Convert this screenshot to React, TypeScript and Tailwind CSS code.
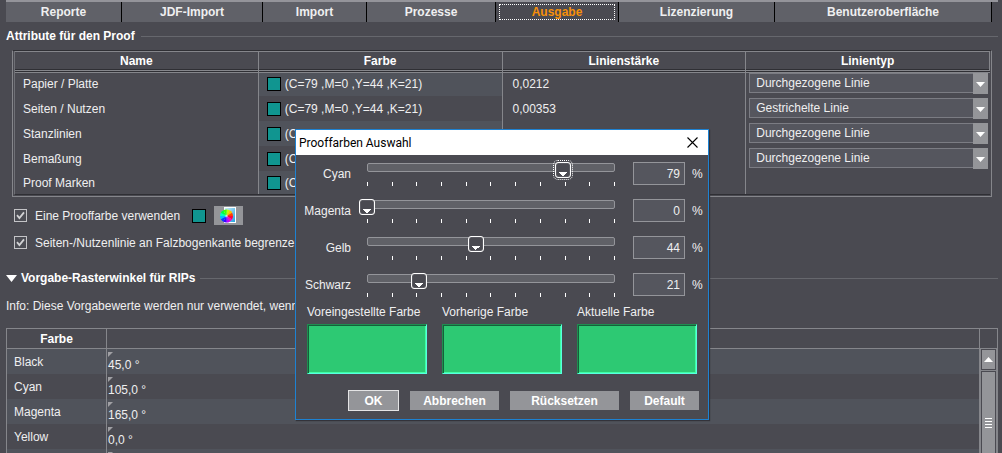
import { useState } from "react"
import clsx from "clsx"

const tabs = ["Reporte", "JDF-Import", "Import", "Prozesse", "Ausgabe", "Lizenzierung", "Benutzeroberfläche"]

const proofColor = "(C=79 ,M=0 ,Y=44 ,K=21)"

const attributes = [
  { name: "Papier / Platte", width: "0,0212", line: "Durchgezogene Linie" },
  { name: "Seiten / Nutzen", width: "0,00353", line: "Gestrichelte Linie" },
  { name: "Stanzlinien", width: "", line: "Durchgezogene Linie" },
  { name: "Bemaßung", width: "", line: "Durchgezogene Linie" },
  { name: "Proof Marken", width: "", line: "" },
]

const angles = [
  { name: "Black", value: "45,0 °" },
  { name: "Cyan", value: "105,0 °" },
  { name: "Magenta", value: "165,0 °" },
  { name: "Yellow", value: "0,0 °" },
  { name: "", value: "" },
]

function Swatch() {
  return <span className="inline-block size-3.5 shrink-0 border border-black bg-[#109590]" />
}

function ColorWheelIcon() {
  const wedges = Array.from({ length: 12 }, (_, i) => {
    const a = ((i * 30 - 90) * Math.PI) / 180
    const b = (((i + 1) * 30 - 88) * Math.PI) / 180
    const x1 = 6.5 + 6.5 * Math.cos(a)
    const y1 = 9 + 6.5 * Math.sin(a)
    const x2 = 6.5 + 6.5 * Math.cos(b)
    const y2 = 9 + 6.5 * Math.sin(b)
    return { d: `M6.5 9L${x1} ${y1}A6.5 6.5 0 0 1 ${x2} ${y2}Z`, fill: `hsl(${75 - i * 30} 100% 50%)` }
  })
  return (
    <svg width="17" height="17" viewBox="0 0 17 17">
      <defs>
        <linearGradient id="sheet" x1="0" y1="0" x2="1" y2="1">
          <stop offset="0" stopColor="#d8f0fb" />
          <stop offset="1" stopColor="#1ba0e0" />
        </linearGradient>
      </defs>
      <rect x="4.5" y="0.5" width="11" height="15" fill="url(#sheet)" stroke="#fff" />
      {wedges.map((w) => (
        <path key={w.d} d={w.d} fill={w.fill} />
      ))}
      <circle cx="6.5" cy="9" r="1.2" fill="#fff" fillOpacity="0.6" />
    </svg>
  )
}

function LineSelect({ label, value }: { label: string; value: string }) {
  return (
    <div className="relative h-[22px]">
      <select
        aria-label={label}
        defaultValue={value}
        className="block h-5 w-full appearance-none border border-[#7b7c83] bg-[#55565e] pr-4 pl-1.5 text-[#efeff0] outline-none"
      >
        <option>Durchgezogene Linie</option>
        <option>Gestrichelte Linie</option>
      </select>
      <span className="pointer-events-none absolute top-0 right-0 flex h-[21px] w-[15px] items-center justify-center bg-[#949599]">
        <svg width="9" height="5" viewBox="0 0 9 5" className="mt-0.5">
          <path d="M0 0H9L4.5 5Z" fill="#fff" />
        </svg>
      </span>
    </div>
  )
}

function AttributeTable() {
  const head = "h-5 border-t border-r border-b border-[#85868b] p-0 shadow-[inset_0_-1px_#2f2f34]"
  return (
    <div className="mr-1.5 ml-1.5 border-x border-t border-b border-x-[#85868b] border-t-[#2f2f34] border-b-[#85868b] px-px pb-px">
      <table className="w-full table-fixed border-separate border-spacing-0 border-b border-l border-b-[#2f2f34] border-l-[#6f7076] text-left">
        <thead>
          <tr className="text-center font-bold text-white">
            <th className={head}>Name</th>
            <th className={head}>Farbe</th>
            <th className={head}>Linienstärke</th>
            <th className={head}>Linientyp</th>
          </tr>
        </thead>
        <tbody>
          {attributes.map((row, i) => {
            const cell = clsx(
              "border-[#85868b] p-0",
              i === 4 ? "h-[23px]" : "h-[25px]",
              i === 0 && "shadow-[inset_0_1px_#2f2f34,inset_0_2px_#85868b]"
            )
            return (
              <tr key={row.name}>
                <td className={clsx(cell, "border-r")}>
                  <div className="pl-2">{row.name}</div>
                </td>
                <td className={clsx(cell, "border-r", i % 2 === 0 && "bg-[#50535b]")}>
                  <div className="flex items-center gap-1 pl-2">
                    <Swatch />
                    {proofColor}
                  </div>
                </td>
                <td className={clsx(cell, "border-r")}>
                  <div className="pl-2.5">{row.width}</div>
                </td>
                <td className={clsx(cell, "pt-0.5 pr-0.5 pl-[3px] align-top")}>
                  {row.line && <LineSelect label={`Linientyp ${row.name}`} value={row.line} />}
                </td>
              </tr>
            )
          })}
        </tbody>
      </table>
    </div>
  )
}

function CheckBox({ id, label }: { id: string; label: string }) {
  return (
    <div className="flex items-center gap-2">
      <span className="relative block size-[13px]">
        <input
          id={id}
          type="checkbox"
          defaultChecked
          className="peer block size-[13px] appearance-none border border-[#c4c4c7] bg-[#4c4d54]"
        />
        <svg
          width="13"
          height="13"
          viewBox="0 0 13 13"
          className="pointer-events-none absolute inset-0 hidden peer-checked:block"
        >
          <path d="M3 6.2L5.4 9L10 3.4" fill="none" stroke="#d2d2d4" strokeWidth="1.8" />
        </svg>
      </span>
      <label htmlFor={id} className="whitespace-nowrap">
        {label}
      </label>
    </div>
  )
}

function AngleTable() {
  return (
    <div className="mt-3.5 flex min-h-0 flex-1 overflow-hidden border-x border-t border-[#85868b]">
      <table className="h-fit flex-1 table-fixed border-separate border-spacing-0 text-left">
        <colgroup>
          <col className="w-[100px]" />
          <col />
        </colgroup>
        <thead>
          <tr className="font-bold text-white">
            <th className="h-5 border-r border-b border-[#85868b] p-0 text-center">Farbe</th>
            <th className="h-5 border-b border-[#85868b] p-0" aria-label="Winkel" />
          </tr>
        </thead>
        <tbody>
          {angles.map((row, i) => (
            <tr key={row.name} className={clsx(i % 2 === 0 && "bg-[#50535b]")}>
              <td className="h-[25px] border-r border-[#85868b] p-0 pl-[7px]">{row.name}</td>
              <td className="h-[25px] p-0 pl-px align-top">
                <svg width="5" height="5" viewBox="0 0 5 5" className="mt-[3px] block">
                  <path d="M0 0H5L0 5Z" fill="#a0a0a4" />
                </svg>
                <div className="leading-4">{row.value}</div>
              </td>
            </tr>
          ))}
        </tbody>
      </table>
      <div className="flex w-[18px] flex-col border-l border-[#85868b]">
        <div className="h-5 shrink-0 border-b border-[#85868b]" />
        <div className="flex min-h-0 flex-1 flex-col border-x border-[#85868b]">
          <button aria-label="Nach oben" className="m-px flex h-[19px] shrink-0 items-center justify-center bg-[#949599]">
            <svg width="9" height="5" viewBox="0 0 9 5">
              <path d="M0 5H9L4.5 0Z" fill="#fff" />
            </svg>
          </button>
          <div className="h-px shrink-0 bg-[#85868b]" />
          <div className="mx-px mt-px flex flex-1 justify-center bg-[#949599] pt-[46px]">
            <svg width="7" height="11" viewBox="0 0 7 11">
              <path d="M0 0.5H7M0 3.5H7M0 6.5H7M0 9.5H7" stroke="#fff" />
            </svg>
          </div>
        </div>
      </div>
    </div>
  )
}

interface ChannelProps {
  id: string
  label: string
  initial: number
  focused?: boolean
}

function Channel({ id, label, initial, focused }: ChannelProps) {
  const [value, setValue] = useState(initial)

  return (
    <div className="flex h-[37px] items-start">
      <label htmlFor={id} className="mt-1 w-[52px] text-right leading-4">
        {label}
      </label>
      <div className="relative ml-4 flex-1">
        <div className="absolute inset-x-0 top-px h-[9px] rounded-xs border border-[#94959a] bg-[#606167]" />
        <input
          id={id}
          type="range"
          min={0}
          max={100}
          value={value}
          onChange={(e) => setValue(Number(e.target.value))}
          className={clsx(
            "relative -mx-2 block h-4 w-[calc(100%+16px)] appearance-none bg-transparent outline-none",
            "[&::-webkit-slider-thumb]:size-4 [&::-webkit-slider-thumb]:appearance-none [&::-webkit-slider-thumb]:rounded-[3px]",
            "[&::-webkit-slider-thumb]:border [&::-webkit-slider-thumb]:border-white [&::-webkit-slider-thumb]:bg-[#4a4a51]",
            "[&::-webkit-slider-thumb]:shadow-[inset_0_0_1px_#fff]",
            "[&::-webkit-slider-thumb]:bg-[conic-gradient(from_315deg_at_50%_100%,#fff_90deg,transparent_0)]",
            "[&::-webkit-slider-thumb]:bg-[length:8px_4px] [&::-webkit-slider-thumb]:bg-[position:center_9px] [&::-webkit-slider-thumb]:bg-no-repeat",
            focused &&
              "[&::-webkit-slider-thumb]:outline [&::-webkit-slider-thumb]:outline-offset-1 [&::-webkit-slider-thumb]:outline-white [&::-webkit-slider-thumb]:outline-dotted"
          )}
        />
        <div className="mt-1 flex justify-between">
          {Array.from({ length: 11 }, (_, i) => (
            <span key={i} className="h-1 w-px bg-white" />
          ))}
        </div>
      </div>
      <input
        type="text"
        aria-label={`${label} in Prozent`}
        value={value}
        onChange={(e) => setValue(Number(e.target.value) || 0)}
        className="ml-[18px] h-[23px] w-[52px] border border-[#94959a] bg-[#55565e] pr-1 text-right outline-none"
      />
      <span className="mt-1 ml-[7px] w-3 leading-4">%</span>
    </div>
  )
}

function ColorPreview({ label }: { label: string }) {
  return (
    <div>
      <div className="h-4 leading-4 whitespace-nowrap">{label}</div>
      <div className="mt-1 h-[50px] w-[120px] border border-t-[#1f8d50] border-r-[#57ffe0] border-b-[#57ffe0] border-l-[#1f8d50] bg-[#2dc973] shadow-[inset_1px_1px_#15603a,inset_-1px_-1px_#3effa4]" />
    </div>
  )
}

function ProofColorDialog() {
  const button = "h-[19px] bg-[#949599] text-center font-bold text-white"
  return (
    <div
      role="dialog"
      aria-labelledby="dialog-title"
      className="absolute top-[129px] left-[295px] w-[414px] border border-[#1e82d2] bg-[#4a4a51] shadow-[1px_1px_1px_#33333a]"
    >
      <div className="flex h-[25px] items-center justify-between bg-white pr-2.5 pl-[3px] text-black">
        <h2 id="dialog-title" className="font-[Roboto,sans-serif] text-[12px]">
          Prooffarben Auswahl
        </h2>
        <button aria-label="Schließen">
          <svg width="11" height="11" viewBox="0 0 11 11">
            <path d="M0.5 0.5L10.5 10.5M10.5 0.5L0.5 10.5" stroke="#000" strokeWidth="1.1" />
          </svg>
        </button>
      </div>
      <div className="pt-[7px] pr-1 pl-[3px]">
        <Channel id="cyan" label="Cyan" initial={79} focused />
        <Channel id="magenta" label="Magenta" initial={0} />
        <Channel id="gelb" label="Gelb" initial={44} />
        <Channel id="schwarz" label="Schwarz" initial={21} />
      </div>
      <div className="-mt-1.5 flex gap-[15px] pl-[11px]">
        <ColorPreview label="Voreingestellte Farbe" />
        <ColorPreview label="Vorherige Farbe" />
        <ColorPreview label="Aktuelle Farbe" />
      </div>
      <div className="mt-4 mb-2 flex items-center justify-end gap-[11px] pr-[9px]">
        <button className="h-[21px] w-[51px] border border-[#e4e4e5] bg-[#949599] text-center font-bold text-white">
          OK
        </button>
        <button className={clsx(button, "w-[89px]")}>Abbrechen</button>
        <button className={clsx(button, "w-[109px]")}>Rücksetzen</button>
        <button className={clsx(button, "w-[69px]")}>Default</button>
      </div>
    </div>
  )
}

export default function App() {
  return (
    <div className="relative flex h-screen flex-col overflow-hidden bg-[#4a4a51] pr-1 pl-1.5 font-['Liberation_Sans',Arial,sans-serif] text-[12px] leading-4 text-[#efeff0]">
      <nav className="border-t-2 border-[#94949a]">
        <div className="mr-1.5 grid grid-cols-[116fr_141fr_104fr_129fr_123fr_156fr_217fr]">
          {tabs.map((tab) => (
            <button
              key={tab}
              className={clsx(
                "flex h-5 border-r border-black font-bold",
                tab === "Ausgabe" ? "bg-[#4a4a51] px-[3px] py-0.5 text-[#f7900a]" : "bg-[#606168]"
              )}
            >
              <span
                className={clsx(
                  "flex-1",
                  tab === "Ausgabe" ? "border border-dotted border-white leading-[15px]" : "leading-5"
                )}
              >
                {tab}
              </span>
            </button>
          ))}
        </div>
      </nav>

      <div className="flex h-7 items-center gap-1.5">
        <h2 className="font-bold text-white">Attribute für den Proof</h2>
        <div className="h-px flex-1 bg-[#66676d]" />
      </div>
      <AttributeTable />

      <div className="mt-[5px] flex h-[27px] items-center pl-2">
        <CheckBox id="one-color" label="Eine Prooffarbe verwenden" />
        <span className="ml-3 flex items-center gap-2">
          <Swatch />
          <button aria-label="Prooffarbe wählen" className="flex h-[19px] w-[29px] items-center justify-center bg-[#949599]">
            <ColorWheelIcon />
          </button>
        </span>
      </div>
      <div className="flex h-[27px] items-center pl-2">
        <CheckBox id="fold-edge" label="Seiten-/Nutzenlinie an Falzbogenkante begrenzen" />
      </div>

      <div className="mt-3.5 flex h-4 items-center gap-1">
        <svg width="11" height="7" viewBox="0 0 11 7">
          <path d="M0 0H11L5.5 7Z" fill="#fff" />
        </svg>
        <h2 className="font-bold text-white">Vorgabe-Rasterwinkel für RIPs</h2>
        <div className="h-px flex-1 bg-[#66676d]" />
      </div>
      <p className="mt-3 whitespace-nowrap">Info: Diese Vorgabewerte werden nur verwendet, wenn</p>
      <AngleTable />

      <ProofColorDialog />
    </div>
  )
}
